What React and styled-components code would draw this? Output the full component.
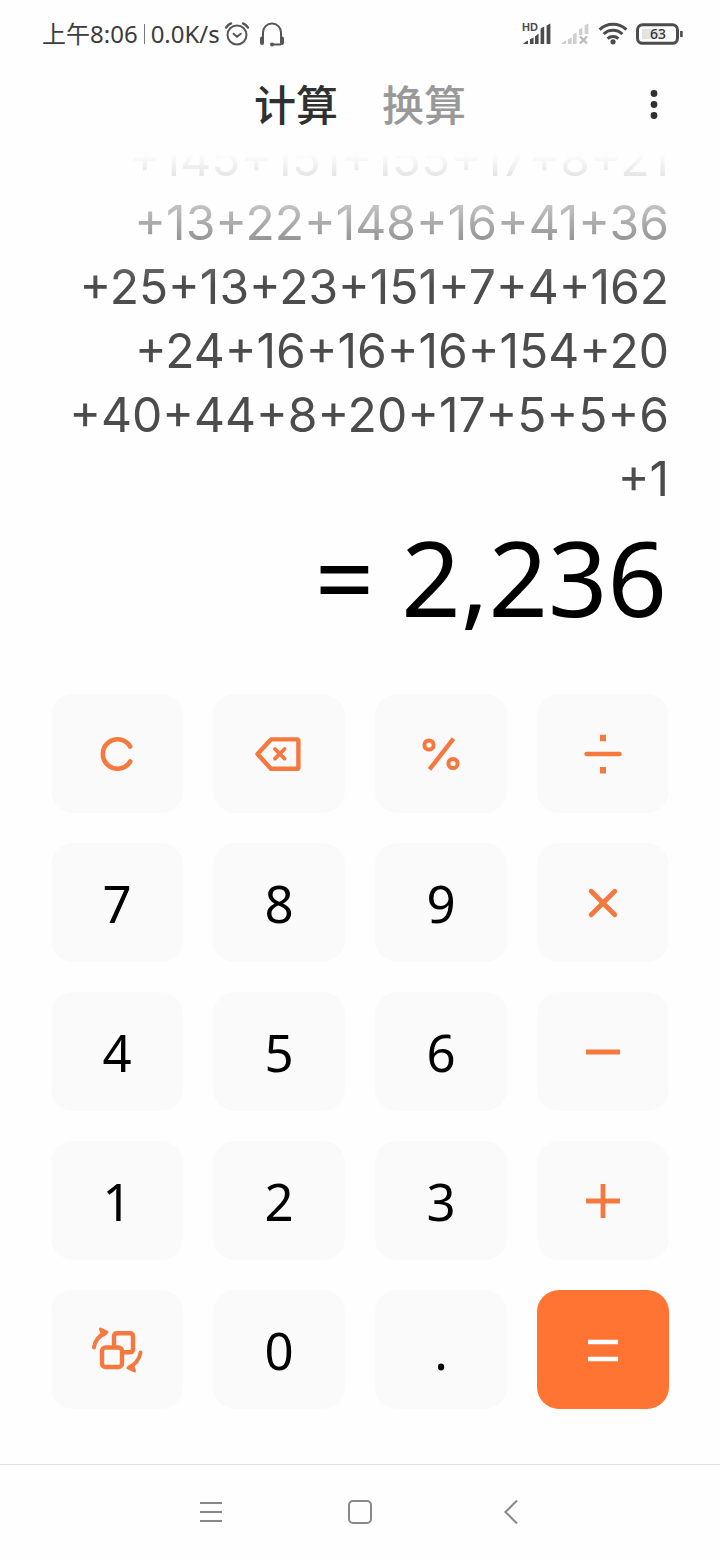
import styled, { createGlobalStyle } from 'styled-components';

const GlobalStyle = createGlobalStyle`
  * {
    box-sizing: border-box;
  }

  body {
    margin: 0;
    background: #fefefe;
    font-family: 'Noto Sans', 'Noto Sans CJK SC', sans-serif;
  }

  svg {
    display: block;
  }
`;

const Page = styled.div`
  display: flex;
  flex-direction: column;
  min-height: 100vh;
`;

const StatusBar = styled.header`
  display: flex;
  align-items: center;
  justify-content: space-between;
  height: 68px;
  padding: 0 36px 0 42px;
  color: #3c3c3c;
  font-size: 24px;
  font-weight: 400;
  line-height: 32px;
`;

const StatusGroup = styled.div`
  display: flex;
  align-items: center;
  gap: ${({ $gap }) => $gap}px;
`;

const StatusIcons = styled(StatusGroup)`
  margin-left: -2px;
`;

const Separator = styled.span`
  width: 1px;
  height: 20px;
  background: #777;
`;

const TopBar = styled.nav`
  display: grid;
  grid-template-columns: 1fr auto 1fr;
  align-items: center;
  height: 74px;
  padding: 0 50px;
`;

const Tabs = styled.div`
  display: flex;
  grid-column: 2;
  gap: 44px;
  padding-bottom: 4px;
`;

const Tab = styled.button`
  padding: 0;
  border: 0;
  background: none;
  color: ${({ $active }) => ($active ? '#303030' : '#999')};
  font-family: 'Noto Sans CJK SC', sans-serif;
  font-size: 42px;
  font-weight: 500;
  line-height: 60px;
`;

const MenuButton = styled.button`
  justify-self: end;
  padding: 0;
  border: 0;
  background: none;
`;

const Display = styled.main`
  display: flex;
  flex-direction: column;
  margin-top: 8px;
  padding: 0 51px;
  text-align: right;
`;

const History = styled.div`
  display: flex;
  flex-direction: column;
  justify-content: flex-end;
  max-height: 361px;
  overflow: hidden;
  color: #4c4c4c;
  font-family: Inter, sans-serif;
  font-size: 48px;
  font-weight: 400;
  line-height: 64px;
  mask-image: linear-gradient(
    to bottom,
    transparent 4px,
    rgba(0, 0, 0, 0.33) 55px,
    rgba(0, 0, 0, 0.6) 91px,
    #000 134px
  );
`;

const Result = styled.output`
  padding-right: 2px;
  color: #000;
  font-size: 104px;
  line-height: 132px;
`;

const Keypad = styled.section`
  display: grid;
  grid-template-columns: repeat(4, 1fr);
  gap: 30px;
  padding: 51px 51px 55px;
`;

const Key = styled.button`
  display: flex;
  align-items: center;
  justify-content: center;
  height: 119px;
  padding: 0;
  border: 0;
  border-radius: 22px;
  background: ${({ $primary }) => ($primary ? '#ff7433' : '#fafafa')};
  color: ${({ $primary }) => ($primary ? '#fff' : '#000')};
  font-family: 'Noto Sans', sans-serif;
  font-size: 51px;
  font-weight: 400;
  line-height: 70px;
`;

const NavBar = styled.footer`
  display: flex;
  align-items: center;
  justify-content: center;
  gap: 110px;
  height: 96px;
  margin-top: auto;
  padding-bottom: 2px;
  border-top: 1px solid #e2e2e2;
`;

const NavButton = styled.button`
  display: flex;
  justify-content: center;
  width: 40px;
  padding: 0;
  border: 0;
  background: none;
`;

const ORANGE = '#f5783e';

const AlarmIcon = () => (
  <svg width="26" height="26" viewBox="0 0 26 26" fill="none" stroke="#555" strokeWidth="2" strokeLinecap="round">
    <circle cx="13" cy="14" r="9.5" />
    <path d="M9.5 12.8l3.5 3 3.8-3" />
    <path d="M2 6.6Q4 3.6 7 2.4M24 6.6Q22 3.6 19 2.4" strokeWidth="2.4" />
  </svg>
);

const HeadsetIcon = () => (
  <svg width="26" height="26" viewBox="0 0 26 26" fill="none" stroke="#555" strokeWidth="2">
    <path d="M4 20V11.500a9 9 0 0 1 18 0V20" />
    <path d="M3 17.500v4.500M23 17.500v4.500" strokeWidth="4" strokeLinecap="round" />
    <path d="M13 23.500h9" />
    <circle cx="13" cy="23.400" r="2" fill="#555" stroke="none" />
  </svg>
);

const HdSignalIcon = () => (
  <svg width="30" height="24" viewBox="0 0 30 24" fill="#4c4c4c">
    <path d="M1 22q2.500-3 5-3.600V22zM8 17.200l3.600-1.800V22H8zM13 14.500l3.600-3V22H13zM18.600 6.600l3.600-2V22h-3.600zM24.600 3.400l3.800-2V22h-3.800z" />
    <text x="0" y="9" fontFamily="Liberation Sans" fontSize="11" fontWeight="700">HD</text>
  </svg>
);

const NoSignalIcon = () => (
  <svg width="30" height="24" viewBox="0 0 30 24" fill="#cfcfcf">
    <path d="M1 22q2.500-3 5-3.600V22zM8 17.200l3.600-1.800V22H8zM13 12.500l3.600-2V22H13zM19 7.600l3.400-2V13H19zM24.600 3.400l3.800-2V12h-3.800z" />
    <path d="M20 14.500l7 7M27 14.500l-7 7" stroke="#bbb" strokeWidth="2.400" />
  </svg>
);

const WifiIcon = () => (
  <svg width="30" height="24" viewBox="0 0 30 24" fill="none" stroke="#4c4c4c" strokeWidth="3">
    <path d="M1.600 7.600a19.500 19.500 0 0 1 26.800 0" />
    <path d="M5.600 12a13.500 13.500 0 0 1 18.800 0" />
    <path d="M9.600 16.600a8 8 0 0 1 10.800 0" />
    <circle cx="15" cy="19.800" r="2.600" fill="#4c4c4c" stroke="none" />
  </svg>
);

const BatteryIcon = () => (
  <svg width="48" height="24" viewBox="0 0 48 24">
    <rect x="1.500" y="2.800" width="40" height="18.500" rx="5" fill="none" stroke="#4c4c4c" strokeWidth="3" />
    <rect x="6" y="7" width="20" height="10" fill="#e4e4e4" />
    <path d="M45.400 9v6" stroke="#4c4c4c" strokeWidth="2.600" />
    <text x="22" y="17" textAnchor="middle" fill="#333" fontFamily="Noto Sans" fontSize="14" fontWeight="500">63</text>
  </svg>
);

const MoreIcon = () => (
  <svg width="32" height="32" viewBox="0 0 32 32" fill="#303030">
    <circle cx="16" cy="4.500" r="3.400" />
    <circle cx="16" cy="15.500" r="3.400" />
    <circle cx="16" cy="26.500" r="3.400" />
  </svg>
);

const KeyIcon = ({ children, color = ORANGE }) => (
  <svg width="60" height="60" viewBox="0 0 60 60" fill="none" stroke={color} strokeWidth="4.400" aria-hidden="true">
    {children}
  </svg>
);

const ClearIcon = () => (
  <KeyIcon>
    <path d="M43.200 22.500A14.700 14.700 0 1 0 43.200 37.500" strokeWidth="4.600" strokeLinecap="round" />
  </KeyIcon>
);

const BackspaceIcon = () => (
  <KeyIcon>
    <path d="M22 15.400H48q1.400 0 1.400 1.400V43.400q0 1.400-1.400 1.400H22L8.500 30z" strokeLinejoin="round" />
    <path d="M26 25l9.600 9.600M35.600 25L26 34.600" strokeWidth="3.800" strokeLinecap="round" />
  </KeyIcon>
);

const PercentIcon = () => (
  <KeyIcon>
    <circle cx="18" cy="21" r="4.600" strokeWidth="4" />
    <circle cx="42" cy="39.500" r="4.600" strokeWidth="4" />
    <path d="M42.500 14.600L18.500 45.400" />
  </KeyIcon>
);

const DivideIcon = () => (
  <KeyIcon>
    <path d="M13.500 30h33" strokeLinecap="round" />
    <path d="M27 14h6M27 46.200h6" strokeWidth="6.400" />
  </KeyIcon>
);

const TimesIcon = () => (
  <KeyIcon>
    <path d="M18.200 18.200l23.600 23.600M41.800 18.200L18.200 41.800" strokeWidth="4.800" strokeLinecap="round" />
  </KeyIcon>
);

const MinusIcon = () => (
  <KeyIcon>
    <path d="M13 30h34" strokeWidth="4.800" />
  </KeyIcon>
);

const PlusIcon = () => (
  <KeyIcon>
    <path d="M13 30h34M30 13v34" strokeWidth="4.800" />
  </KeyIcon>
);

const SwitchIcon = () => (
  <KeyIcon>
    <rect x="15" y="27.500" width="20" height="19.500" rx="3.500" />
    <path d="M27 26V16.500q0-3.300 3.300-3.300H42.700q3.300 0 3.300 3.300V29q0 3.300-3.300 3.300H36.500" />
    <path d="M7 27.500Q8.500 17 18 13.500" strokeWidth="4" strokeLinecap="round" />
    <path d="M13.500 9l6.500 3-5 1.500z" fill={ORANGE} strokeWidth="3" strokeLinejoin="round" />
    <path d="M53.500 32.500Q51.500 43 42.500 47" strokeWidth="4" strokeLinecap="round" />
    <path d="M47.500 51l-6.500-3 5-1.500z" fill={ORANGE} strokeWidth="3" strokeLinejoin="round" />
  </KeyIcon>
);

const EqualsIcon = () => (
  <KeyIcon color="#fff">
    <path d="M15 22h30M15 39h30" strokeWidth="4.600" />
  </KeyIcon>
);

const history = [
  '+145+151+155+17+8+21',
  '+13+22+148+16+41+36',
  '+25+13+23+151+7+4+162',
  '+24+16+16+16+154+20',
  '+40+44+8+20+17+5+5+6',
  '+1',
];

const keys = [
  { name: 'clear', icon: ClearIcon },
  { name: 'backspace', icon: BackspaceIcon },
  { name: 'percent', icon: PercentIcon },
  { name: 'divide', icon: DivideIcon },
  { name: '7' },
  { name: '8' },
  { name: '9' },
  { name: 'multiply', icon: TimesIcon },
  { name: '4' },
  { name: '5' },
  { name: '6' },
  { name: 'subtract', icon: MinusIcon },
  { name: '1' },
  { name: '2' },
  { name: '3' },
  { name: 'add', icon: PlusIcon },
  { name: 'switch layout', icon: SwitchIcon },
  { name: '0' },
  { name: '.' },
  { name: 'equals', icon: EqualsIcon, primary: true },
];

function App() {
  return (
    <Page>
      <GlobalStyle />
      <StatusBar>
        <StatusGroup $gap={6}>
          <span>上午8:06</span>
          <Separator />
          <span>0.0K/s</span>
          <StatusIcons $gap={9}>
            <AlarmIcon />
            <HeadsetIcon />
          </StatusIcons>
        </StatusGroup>
        <StatusGroup $gap={8}>
          <HdSignalIcon />
          <NoSignalIcon />
          <WifiIcon />
          <BatteryIcon />
        </StatusGroup>
      </StatusBar>

      <TopBar>
        <Tabs>
          <Tab $active>计算</Tab>
          <Tab>换算</Tab>
        </Tabs>
        <MenuButton aria-label="menu">
          <MoreIcon />
        </MenuButton>
      </TopBar>

      <Display>
        <History>
          {history.map((line) => (
            <div key={line}>{line}</div>
          ))}
        </History>
        <Result>= 2,236</Result>
      </Display>

      <Keypad>
        {keys.map(({ name, icon: Icon, primary }) => (
          <Key key={name} $primary={primary} aria-label={name}>
            {Icon ? <Icon /> : name}
          </Key>
        ))}
      </Keypad>

      <NavBar>
        <NavButton aria-label="recent apps">
          <svg width="26" height="26" viewBox="0 0 26 26" fill="none" stroke="#888" strokeWidth="2">
            <path d="M3 4h22M3 13h22M3 22h22" />
          </svg>
        </NavButton>
        <NavButton aria-label="home">
          <svg width="26" height="26" viewBox="0 0 26 26" fill="none" stroke="#888" strokeWidth="2">
            <rect x="2" y="2" width="22" height="22" rx="4" />
          </svg>
        </NavButton>
        <NavButton aria-label="back">
          <svg width="26" height="26" viewBox="0 0 26 26" fill="none" stroke="#888" strokeWidth="2">
            <path d="M20 1.500L8.500 13 20 24.500" />
          </svg>
        </NavButton>
      </NavBar>
    </Page>
  );
}

export default App;
